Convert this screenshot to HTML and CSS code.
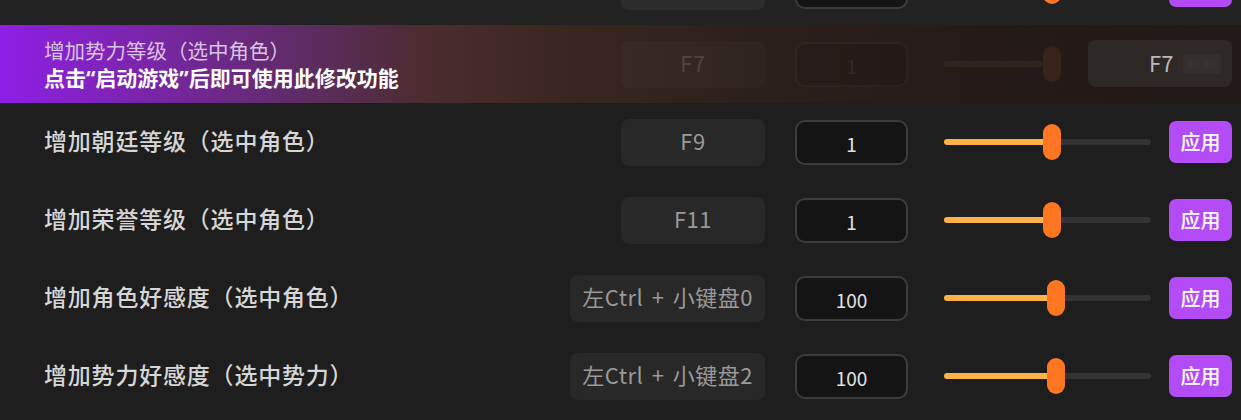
FILE: index.html
```html
<!DOCTYPE html>
<html lang="zh-CN">
<head>
  <meta charset="UTF-8" />
  <title>修改器</title>
  <link rel="stylesheet" href="styles.css">
</head>
<body>
  <div class="list">
    <div class="row current">
      <div class="label">增加势力等级（选中势力）</div>
      <div class="key">F6</div>
      <div class="num">1</div>
      <div class="slider"><div class="fill" style="width: 52%"></div><div class="thumb" style="left: 99px"></div></div>
      <button class="apply">应用</button>
    </div>

    <div class="row locked">
      <div class="label">
        <div class="title">增加势力等级（选中角色）</div>
        <div class="hint">点击“启动游戏”后即可使用此修改功能</div>
      </div>
      <div class="key">F7</div>
      <div class="num">1</div>
      <div class="slider"><div class="fill" style="width: 48%"></div><div class="thumb" style="left: 99px"></div></div>
      <button class="apply">应用</button>
      <div class="hotkey">
        <span>F7</span>
        <svg width="38" height="20" viewBox="0 0 38 20"><rect x="0" y="0" width="38" height="20" rx="2" fill="#332f2c"/><rect x="5" y="5" width="12" height="10" fill="#37322f"/><rect x="21" y="5" width="12" height="10" fill="#37322f"/></svg>
      </div>
    </div>

    <div class="row">
      <div class="label">增加朝廷等级（选中角色）</div>
      <div class="key">F9</div>
      <div class="num">1</div>
      <div class="slider"><div class="fill" style="width: 52%"></div><div class="thumb" style="left: 99px"></div></div>
      <button class="apply">应用</button>
    </div>

    <div class="row">
      <div class="label">增加荣誉等级（选中角色）</div>
      <div class="key">F11</div>
      <div class="num">1</div>
      <div class="slider"><div class="fill" style="width: 52%"></div><div class="thumb" style="left: 99px"></div></div>
      <button class="apply">应用</button>
    </div>

    <div class="row">
      <div class="label">增加角色好感度（选中角色）</div>
      <div class="key">左Ctrl + 小键盘0</div>
      <div class="num">100</div>
      <div class="slider"><div class="fill" style="width: 54%"></div><div class="thumb" style="left: 103px"></div></div>
      <button class="apply">应用</button>
    </div>

    <div class="row">
      <div class="label">增加势力好感度（选中势力）</div>
      <div class="key">左Ctrl + 小键盘2</div>
      <div class="num">100</div>
      <div class="slider"><div class="fill" style="width: 54%"></div><div class="thumb" style="left: 103px"></div></div>
      <button class="apply">应用</button>
    </div>
  </div>
</body>
</html>
```

FILE: styles.css
```css
body {
  margin: 0;
  background-color: #1e1e1e;
  font-family: "Noto Sans CJK SC", "Noto Sans", sans-serif;
  overflow: hidden;
}

.list {
  margin-top: -53px;
}

.row {
  position: relative;
  display: flex;
  align-items: center;
  height: 78px;
  padding: 0 9px 0 44px;
}

.row.current {
  background-color: #212221;
}

.label {
  flex: 1;
  font-size: 23px;
  font-weight: 500;
  letter-spacing: 0.8px;
  color: #d6d6d6;
  padding-bottom: 4px;
}

.key {
  min-width: 144px;
  box-sizing: border-box;
  height: 47px;
  padding: 0 12px 4px;
  display: flex;
  align-items: center;
  justify-content: center;
  background-color: #282828;
  border-radius: 8px;
  color: #999;
  font-size: 22px;
  letter-spacing: 0.5px;
  word-spacing: 3px;
  white-space: nowrap;
  margin-right: 30px;
}

.current .key {
  background-color: #2c2c2c;
}

.num {
  width: 113px;
  height: 45px;
  box-sizing: border-box;
  border: 2px solid #3c3c3c;
  border-radius: 10px;
  background-color: #141414;
  color: #e2e2e2;
  font-size: 19px;
  display: flex;
  align-items: center;
  justify-content: center;
  padding-top: 3px;
  margin-right: 36px;
}

.slider {
  position: relative;
  width: 207px;
  height: 6px;
  border-radius: 3px;
  background-color: #333;
  margin-right: 18px;
}

.fill {
  height: 100%;
  border-radius: 3px;
  background-color: #ffb347;
}

.thumb {
  position: absolute;
  top: -15px;
  width: 18px;
  height: 36px;
  border-radius: 9px;
  background-color: #ff7622;
}

.apply {
  width: 63px;
  height: 42px;
  border: none;
  border-radius: 7px;
  background-color: #b34cf6;
  color: #fff;
  font-family: inherit;
  font-size: 20px;
  font-weight: 500;
  padding: 0 0 2px;
}

/* row that is not usable until the game is started */
.row.locked {
  background: linear-gradient(90deg, #8e1fe6 0%, #7a25a8 12%, #5f2c66 24%, #4c2c30 34%, #3a2620 46%, #2c201c 60%, #241b19 80%, #221a18 100%);
}

.locked .label {
  letter-spacing: 0;
  padding-bottom: 0;
}

.locked .title {
  font-size: 20.5px;
  font-weight: 400;
  color: #d9c4e6;
  line-height: 27px;
}

.locked .hint {
  font-family: "Noto Sans", "Noto Sans CJK SC", sans-serif;
  font-size: 21px;
  font-weight: 700;
  color: #fff;
  line-height: 28px;
}

.locked .key {
  background-color: rgba(255, 255, 255, 0.025);
  color: rgba(255, 255, 255, 0.15);
}

.locked .num {
  background-color: rgba(0, 0, 0, 0.08);
  border-color: rgba(255, 255, 255, 0.04);
  color: rgba(255, 255, 255, 0.08);
}

.locked .slider {
  background-color: transparent;
}

.locked .fill {
  background-color: rgba(255, 180, 80, 0.06);
}

.locked .thumb {
  background-color: rgba(255, 110, 30, 0.1);
}

.locked .apply {
  visibility: hidden;
}

.hotkey {
  position: absolute;
  right: 9px;
  top: 15px;
  width: 144px;
  height: 47px;
  box-sizing: border-box;
  padding: 0 0 3px 61px;
  display: flex;
  align-items: center;
  gap: 10px;
  border-radius: 8px;
  background-color: #2e2927;
  color: #b8b8b8;
  font-size: 22px;
}

.hotkey svg {
  margin-top: 3px;
}
```
